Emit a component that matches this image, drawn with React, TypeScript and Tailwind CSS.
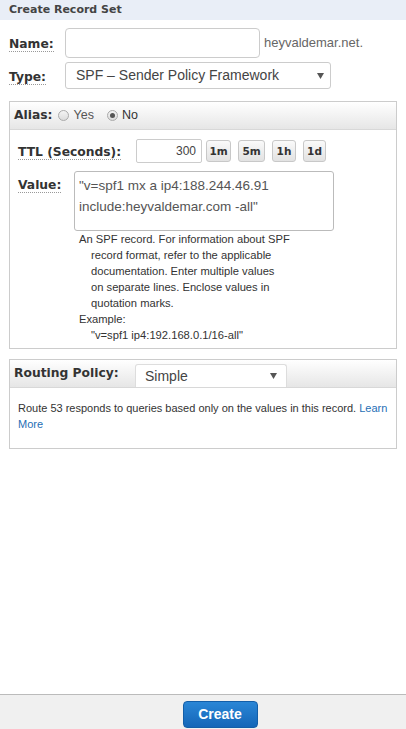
import React from "react";

const label = "font-['DejaVu_Sans',Verdana,sans-serif] font-bold text-[#333] border-b border-dotted border-[#999] leading-[15px] text-[12.3px]";

function Radio({ checked }: { checked?: boolean }) {
  return (
    <span className="inline-flex items-center justify-center w-[11px] h-[11px] rounded-full border border-[#aaa] bg-gradient-to-b from-[#f4f4f4] to-[#dcdcdc]">
      {checked && <span className="w-[5px] h-[5px] rounded-full bg-[#555]" />}
    </span>
  );
}

function Caret() {
  return (
    <svg width="7" height="6" viewBox="0 0 7 6" className="shrink-0">
      <path d="M0 0 L7 0 L3.5 6 Z" fill="#555" />
    </svg>
  );
}

function TBtn({ t, w }: { t: string; w: string }) {
  return (
    <button className={`${w} h-[22px] rounded-[3px] border border-[#c8c8c8] bg-gradient-to-b from-[#fafafa] to-[#e2e2e2] text-[10.5px] font-bold text-[#333] font-['DejaVu_Sans',sans-serif] leading-none`}>
      {t}
    </button>
  );
}

export default function App() {
  return (
    <div className="w-[406px] h-[729px] flex flex-col bg-white font-['Liberation_Sans',Arial,sans-serif] text-[#333]">
      <div className="flex-1">
        <div className="h-[20px] bg-[#e9eef7] pl-[9px] flex items-center">
          <span className="font-['DejaVu_Sans',Verdana,sans-serif] font-bold text-[11px] text-[#444]">Create Record Set</span>
        </div>

        <div className="flex items-center mt-[8px] pl-[9px]">
          <span className="w-[56px] shrink-0"><span className={label}>Name:</span></span>
          <div className="w-[195px] h-[30px] rounded-[4px] border border-[#ccc] bg-white" />
          <span className="ml-[4px] text-[13px] text-[#666]">heyvaldemar.net.</span>
        </div>

        <div className="flex items-center mt-[4px] pl-[9px]">
          <span className="w-[56px] shrink-0"><span className={label}>Type:</span></span>
          <div className="w-[266px] h-[27px] rounded-[3px] border border-[#ccc] bg-white flex items-center justify-between pl-[10px] pr-[6px]">
            <span className="text-[14px] text-[#444]">SPF – Sender Policy Framework</span>
            <Caret />
          </div>
        </div>

        <div className="mx-[9px] mt-[12px] border border-[#ccc]">
          <div className="h-[28px] bg-gradient-to-b from-white to-[#e6e6e6] border-b border-[#d8d8d8] flex items-center pl-[4px] text-[12.5px]">
            <span className={`${label} border-b-0`}>Alias:</span>
            <span className="ml-[6px] flex items-center gap-[4px] text-[#555]"><Radio /> Yes</span>
            <span className="ml-[13px] flex items-center gap-[4px] text-[#333]"><Radio checked /> No</span>
          </div>

          <div className="flex items-center mt-[9px] pl-[8px]">
            <span className="w-[118px] shrink-0"><span className={label}>TTL (Seconds):</span></span>
            <div className="w-[66px] h-[24px] border border-[#ccc] rounded-[2px] bg-white flex items-center justify-end pr-[5px] text-[12px] text-[#444]">300</div>
            <div className="flex gap-[7px] ml-[4px]">
              <TBtn t="1m" w="w-[25px]" />
              <TBtn t="5m" w="w-[27px]" />
              <TBtn t="1h" w="w-[24px]" />
              <TBtn t="1d" w="w-[23px]" />
            </div>
          </div>

          <div className="flex mt-[8px] pl-[8px]">
            <span className="w-[56px] shrink-0 pt-[1px]"><span className={label}>Value:</span></span>
            <div>
              <div className="w-[260px] h-[60px] border border-[#bbb] rounded-[3px] bg-white px-[4px] pt-[3px] text-[13.5px] leading-[21px] text-[#555]">
                "v=spf1 mx a ip4:188.244.46.91<br />include:heyvaldemar.com -all"
              </div>
              <div className="pl-[5px] text-[11.2px] leading-[16px] text-[#333] whitespace-nowrap">
                <div>An SPF record. For information about SPF</div>
                <div className="pl-[12px]">
                  record format, refer to the applicable<br />
                  documentation. Enter multiple values<br />
                  on separate lines. Enclose values in<br />
                  quotation marks.
                </div>
                <div>Example:</div>
                <div className="pl-[12px]">"v=spf1 ip4:192.168.0.1/16-all"</div>
              </div>
            </div>
          </div>
          <div className="h-[5px]" />
        </div>

        <div className="mx-[9px] mt-[10px] border border-[#ccc]">
          <div className="h-[28px] bg-gradient-to-b from-white to-[#e6e6e6] border-b border-[#d8d8d8] flex items-end pl-[4px]">
            <span className={`${label} border-b-0 self-center w-[121px]`}>Routing Policy:</span>
            <div className="w-[152px] h-[23px] bg-white border border-[#ddd] border-b-0 rounded-t-[3px] flex items-center justify-between pl-[9px] pr-[9px]">
              <span className="text-[14px] text-[#444]">Simple</span>
              <Caret />
            </div>
          </div>
          <p className="px-[8px] pt-[12px] pb-[16px] text-[11px] leading-[16px] text-[#333]">
            Route 53 responds to queries based only on the values in this record. <a className="text-[#1f6fb5]">Learn</a> <a className="text-[#1f6fb5]">More</a>
          </p>
        </div>
      </div>

      <div className="h-[35px] border-t border-[#bbb] bg-[#f0f0f0] flex justify-center pt-[6px]">
        <button className="ml-[34px] w-[75px] h-[27px] rounded-[4px] bg-gradient-to-b from-[#2a86d6] to-[#1466b8] border border-[#135ea8] text-white font-bold text-[14px] font-['Liberation_Sans',Arial,sans-serif]">Create</button>
      </div>
    </div>
  );
}
